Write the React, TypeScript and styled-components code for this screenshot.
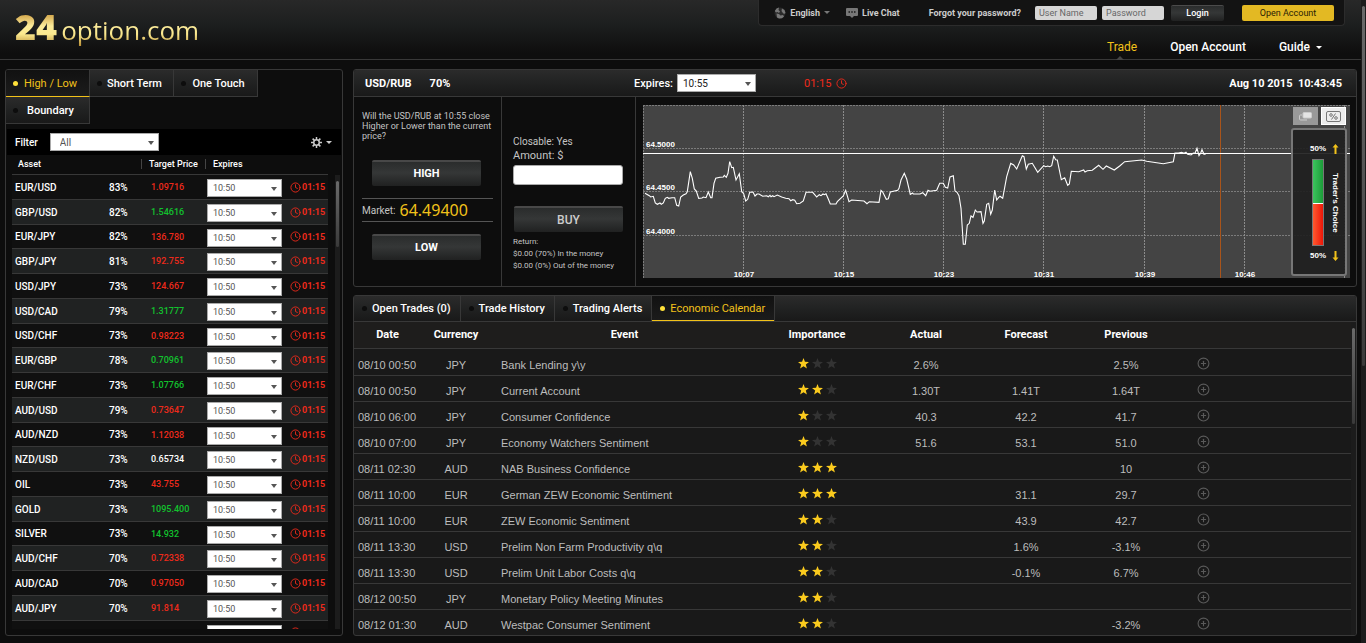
import React from "react";
import styled, { createGlobalStyle, css } from "styled-components";
import { CirclePlus, Clock } from "lucide-react";

const c = {
  gold: "#f2c21a",
  red: "#ee2a1b",
  green: "#12c22e",
  line: "#383838",
  page: "#0d0d0d",
};

const GlobalStyle = createGlobalStyle`
  *, *::before, *::after { box-sizing: border-box; }
  body {
    margin: 0;
    background: ${c.page};
    color: #fff;
    font-family: Roboto, "Liberation Sans", sans-serif;
    font-size: 11px;
  }
  button, input, select { font: inherit; margin: 0; }
  a { color: inherit; text-decoration: none; }
`;

const Page = styled.div`
  display: grid;
  grid-template-columns: minmax(0, 1fr) 5px;
  height: 100vh;
  min-height: 420px;
  overflow: hidden;
`;

const Column = styled.div`
  display: flex;
  flex-direction: column;
  min-height: 0;
  min-width: 0;
`;

/* Slim scroll rail */

const Rail = styled.div<{ $thumb: string }>`
  display: flex;
  flex-direction: column;
  justify-content: space-between;
  align-items: center;
  width: 5px;
  flex: none;
  background: #1c1c1c;
  &::before {
    content: "";
    width: 3px;
    height: ${(p) => p.$thumb};
    margin-top: 6px;
    background: linear-gradient(#6a6a6a, #3a3a3a);
    border-radius: 2px;
  }
`;

const Caret = styled.span<{ $color?: string }>`
  display: inline-block;
  border: 3px solid transparent;
  border-top-color: ${(p) => p.$color ?? "#ccc"};
  border-bottom: 0;
`;

/* Header */

const Header = styled.header`
  display: flex;
  justify-content: space-between;
  height: 60px;
  flex: none;
  border-bottom: 1px solid ${c.line};
  background: linear-gradient(#282828, #1d1f1f 40%, #0e0e0e 90%);
`;

const Logo = styled.a`
  display: flex;
  align-items: baseline;
  padding: 7px 0 0 15px;
  height: 50px;
  font: 400 26px/40px "Open Sans", sans-serif;
  background: linear-gradient(#c9973a 12px, #fbeb9a 26px, #fbe98f 34px, #b98f35 46px);
  background-clip: text;
  -webkit-background-clip: text;
  color: transparent;
`;

const LogoMark = styled.strong`
  font-size: 36px;
  font-weight: 800;
  padding-right: 4px;
`;

const HeaderRight = styled.div`
  display: flex;
  flex-direction: column;
  align-items: flex-end;
`;

const TopBar = styled.div`
  display: flex;
  align-items: center;
  height: 26px;
  margin-right: 16px;
  padding: 0 10px 0 15px;
  background: #131313;
  border: 1px solid #2c2c2c;
  border-top: 0;
  border-radius: 0 0 4px 4px;
  font-size: 9px;
  font-weight: 700;
  color: #ccc;
`;

const TopLink = styled.a<{ $gap: number }>`
  display: flex;
  align-items: center;
  gap: 4px;
  margin-right: ${(p) => p.$gap}px;
  white-space: nowrap;
`;

const LoginForm = styled.form`
  display: flex;
  align-items: center;
  gap: 5px;
`;

const LoginInput = styled.input`
  width: 62px;
  height: 14px;
  padding: 0 4px;
  border: 0;
  border-radius: 2px;
  background: #d6d6d6;
  font-weight: 400;
  &::placeholder { color: #666; opacity: 1; }
`;

const darkButton = css`
  border: 0;
  border-top: 1px solid #4b4b4b;
  border-radius: 2px;
  background: linear-gradient(#2a2c2c, #353737 45%, #202121);
  color: #fff;
  padding: 0;
`;

const LoginButton = styled.button`
  ${darkButton}
  width: 53px;
  height: 16px;
  margin: 0 18px 0 2px;
  font-weight: 500;
`;

const AccountButton = styled.button`
  width: 92px;
  height: 16px;
  padding: 0;
  border: 0;
  border-radius: 2px;
  background: #e3b923;
  color: #2a2205;
  font-weight: 400;
`;

const Nav = styled.nav`
  display: flex;
  gap: 33px;
  padding: 12px 39px 0 0;
  font-size: 12px;
  font-weight: 500;
  line-height: 16px;
`;

const NavLink = styled.a<{ $active?: boolean }>`
  display: flex;
  align-items: center;
  gap: 6px;
  position: relative;
  height: 18px;
  color: ${(p) => (p.$active ? c.gold : "#fff")};
  ${(p) => p.$active && css`
    font-weight: 400;
    &::after {
      content: "";
      position: absolute;
      left: 9px;
      top: 18px;
      border: 4px solid transparent;
      border-bottom-color: #444;
      border-top: 0;
    }
  `}
`;

/* Panels and tabs */

const Main = styled.main`
  display: flex;
  gap: 10px;
  flex: 1;
  min-height: 0;
  padding: 9px 4px 7px 5px;
`;

const Panel = styled.section`
  display: flex;
  flex-direction: column;
  border: 1px solid ${c.line};
  border-radius: 3px;
  min-height: 0;
  overflow: hidden;
`;

const AssetPanel = styled(Panel)`
  width: 338px;
  flex: none;
`;

const Right = styled.div`
  display: flex;
  flex-direction: column;
  gap: 8px;
  flex: 1;
  min-width: 0;
`;

const panelBar = "linear-gradient(#2b2b2b, #212222 50%, #191919)";

const AssetTabs = styled.div`
  display: flex;
  flex-wrap: wrap;
  padding-right: 60px;
`;

const CalendarTabs = styled.div`
  display: flex;
  height: 26px;
  flex: none;
  background: ${panelBar};
  border-bottom: 1px solid ${c.line};
`;

const TabButton = styled.button<{ $active?: boolean }>`
  display: flex;
  align-items: center;
  border: 0;
  border-right: 1px solid ${c.line};
  background: ${(p) => (p.$active ? "linear-gradient(#111, #1c1c1c)" : panelBar)};
  box-shadow: ${(p) => (p.$active ? `inset 0 -1px ${c.gold}` : "none")};
  color: ${(p) => (p.$active ? c.gold : "#fff")};
  font-weight: ${(p) => (p.$active ? 400 : 500)};
  white-space: nowrap;
  &::before {
    content: "";
    width: 5px;
    height: 5px;
    flex: none;
    border-radius: 50%;
    background: ${(p) => (p.$active ? "#ffe13a" : "#0d0d0d")};
  }
`;

const AssetTab = styled(TabButton)`
  width: 84px;
  height: 27px;
  padding: 1px 6px 0 7px;
  border-bottom: 1px solid ${(p) => (p.$active ? c.gold : c.line)};
  box-shadow: none;
  span { flex: 1; text-align: center; }
`;

const CalendarTab = styled(TabButton)`
  gap: 5px;
  height: 25px;
  padding: 0 9px 0 8px;
`;

/* Selects */

const SelectBox = styled.span<{ $w: number }>`
  display: inline-block;
  position: relative;
  width: ${(p) => p.$w}px;
  height: 18px;
  vertical-align: top;
  &::after {
    content: "";
    position: absolute;
    right: 5px;
    top: 8px;
    border: 3px solid transparent;
    border-top: 4px solid #555;
    border-bottom: 0;
    pointer-events: none;
  }
`;

const Select = styled.select<{ $pad?: number; $ink?: string }>`
  appearance: none;
  display: block;
  width: 100%;
  height: 18px;
  padding: 0 10px 0 ${(p) => p.$pad ?? 5}px;
  border: 1px solid #aaa;
  border-radius: 0;
  background: #fff;
  color: ${(p) => p.$ink ?? "#555"};
  font-weight: 400;
`;

function Dropdown({ label, value, width, pad, ink }: { label: string; value: string; width: number; pad?: number; ink?: string }) {
  return (
    <SelectBox $w={width}>
      <Select aria-label={label} defaultValue={value} $pad={pad} $ink={ink}>
        <option>{value}</option>
      </Select>
    </SelectBox>
  );
}

/* Asset list */

const FilterRow = styled.div`
  display: flex;
  align-items: center;
  height: 26px;
  flex: none;
  margin: 5px 1px 0;
  padding: 0 9px 0 8px;
  background: #000;
  font-size: 10px;
`;

const FilterLabel = styled.label`
  display: flex;
  align-items: center;
  gap: 12px;
  font-weight: 500;
  flex: 1;
`;

const IconButton = styled.button`
  display: flex;
  align-items: center;
  gap: 4px;
  padding: 0;
  border: 0;
  background: none;
  color: #ccc;
`;

const ListArea = styled.div`
  display: flex;
  justify-content: space-between;
  flex: 1;
  min-height: 0;
  padding: 0 2px 0 6px;
  margin-bottom: 6px;
  overflow: hidden;
`;

const ListRail = styled(Rail)`
  margin-top: 20px;
`;

const AssetTable = styled.table`
  width: 316px;
  height: max-content;
  border-collapse: separate;
  border-spacing: 0;
  table-layout: fixed;
  font-size: 9px;
  font-weight: 500;
  td, th { padding: 0; text-align: left; white-space: nowrap; }
  th { height: 20px; padding-bottom: 2px; font-weight: 500; border-bottom: 1px solid ${c.line}; }
`;

const HeadLabel = styled.span<{ $rule?: boolean }>`
  display: block;
  line-height: 10px;
  padding-left: ${(p) => (p.$rule ? 7 : 6)}px;
  border-left: ${(p) => (p.$rule ? "1px solid #444" : "0")};
`;

const AssetRow = styled.tr`
  height: 25px;
  background: #101010;
  &:nth-child(even) { background: #202222; }
  &:nth-child(4n + 3) { height: 24px; }
  td { border-bottom: 1px solid ${c.line}; }
`;

const NameCell = styled.td`
  font-size: 10px;
  && { padding-left: 3px; }
`;

const PctCell = styled.td`
  font-size: 10px;
`;

const PriceCell = styled.td<{ $dir: string }>`
  && { padding-left: 10px; }
  color: ${(p) => (p.$dir === "up" ? c.green : p.$dir === "down" ? c.red : "#fff")};
`;

const SelectCell = styled.td`
  && { padding: 2px 0 0 2px; }
`;

const Timer = styled.span`
  display: flex;
  align-items: center;
  gap: 1px;
  color: ${c.red};
  font-weight: 700;
`;

const ASSETS: [string, string, string, string][] = [
  ["EUR/USD", "83%", "1.09716", "down"],
  ["GBP/USD", "82%", "1.54616", "up"],
  ["EUR/JPY", "82%", "136.780", "down"],
  ["GBP/JPY", "81%", "192.755", "down"],
  ["USD/JPY", "73%", "124.667", "down"],
  ["USD/CAD", "79%", "1.31777", "up"],
  ["USD/CHF", "73%", "0.98223", "down"],
  ["EUR/GBP", "78%", "0.70961", "up"],
  ["EUR/CHF", "73%", "1.07766", "up"],
  ["AUD/USD", "79%", "0.73647", "down"],
  ["AUD/NZD", "73%", "1.12038", "down"],
  ["NZD/USD", "73%", "0.65734", "flat"],
  ["OIL", "73%", "43.755", "down"],
  ["GOLD", "73%", "1095.400", "up"],
  ["SILVER", "73%", "14.932", "up"],
  ["AUD/CHF", "70%", "0.72338", "down"],
  ["AUD/CAD", "70%", "0.97050", "down"],
  ["AUD/JPY", "70%", "91.814", "down"],
];

/* Trade ticket */

const TradePanel = styled(Panel)`
  flex: none;
`;

const TradeHead = styled.div`
  display: grid;
  grid-template-columns: 269px auto 1fr;
  align-items: center;
  height: 27px;
  padding: 0 14px 0 11px;
  background: ${panelBar};
  border-bottom: 1px solid ${c.line};
  font-weight: 700;
`;

const HeadGroup = styled.div<{ $gap: number }>`
  display: flex;
  align-items: center;
  gap: ${(p) => p.$gap}px;
`;

const ExpiresLabel = styled.label`
  display: flex;
  align-items: center;
  gap: 4px;
  font-weight: 500;
  select { font-size: 10px; }
`;

const HeadTimer = styled.span`
  display: flex;
  align-items: center;
  gap: 5px;
  color: ${c.red};
  font-weight: 400;
`;

const HeadClock = styled.time`
  justify-self: end;
  white-space: pre;
`;

const TradeBody = styled.div`
  display: flex;
  height: 189px;
`;

const Direction = styled.div`
  width: 148px;
  flex: none;
  padding: 14px 8px 0;
  border-right: 1px solid ${c.line};
  color: #c4c4c4;
`;

const Question = styled.p`
  height: 49px;
  margin: 0;
  font-size: 9px;
  line-height: 10px;
`;

const ActionButton = styled.button`
  ${darkButton}
  display: block;
  width: 109px;
  height: 26px;
  margin: 0 10px;
  padding-bottom: 1px;
  border-top: 2px solid #484848;
  font-weight: 700;
`;

const MarketRow = styled.div`
  display: flex;
  align-items: center;
  gap: 4px;
  height: 24px;
  margin: 12px 0;
  border: 1px solid #555;
  border-width: 1px 0;
  font-size: 10px;
`;

const MarketPrice = styled.span`
  font: 400 16px/22px "Noto Sans", sans-serif;
  color: ${c.gold};
`;

const Order = styled.div`
  width: 134px;
  flex: none;
  padding: 38px 12px 0 11px;
  border-right: 1px solid ${c.line};
  color: #c4c4c4;
  font-size: 10px;
  line-height: 14px;
`;

const AmountLabel = styled.label`
  display: block;
  font-size: 11px;
  line-height: 13px;
`;

const AmountInput = styled.input`
  display: block;
  width: 110px;
  height: 20px;
  margin: 3px 0 21px;
  border: 1px solid #aaa;
  border-radius: 3px;
  background: #fff;
`;

const BuyButton = styled(ActionButton)`
  margin: 0 0 4px 1px;
  font-size: 12px;
  font-weight: 500;
  color: #ccc;
`;

const ReturnText = styled.p`
  margin: 0;
  font-size: 8px;
  line-height: 12px;
  white-space: nowrap;
`;

/* Chart */

const ChartWrap = styled.div`
  position: relative;
  flex: 1;
  min-width: 0;
  height: 173px;
  margin: 8px 6px 0 7px;
  background: #444;
  overflow: hidden;
`;

const ChartSvg = styled.svg`
  display: block;
  width: 100%;
  height: 173px;
  text {
    font: 700 8px "Liberation Sans", sans-serif;
    fill: #fff;
  }
`;

const ChartTools = styled.div`
  position: absolute;
  right: 4px;
  top: 2px;
  display: flex;
  gap: 3px;
`;

const ToolButton = styled.button<{ $on?: boolean }>`
  display: grid;
  place-items: center;
  width: 25px;
  height: 18px;
  padding: 0;
  border: 1px solid ${(p) => (p.$on ? "#fff" : "#999")};
  background: ${(p) => (p.$on ? "#ececec" : "#999")};
`;

const ChoicePanel = styled.div`
  position: absolute;
  right: 3px;
  top: 23px;
  width: 56px;
  height: 148px;
  display: grid;
  grid-template-columns: 16px 10px;
  grid-template-rows: 12px 87px 12px;
  justify-content: end;
  align-content: center;
  justify-items: center;
  align-items: center;
  column-gap: 4px;
  row-gap: 4px;
  padding: 1px 5px 0 0;
  border: 2px solid #777;
  border-radius: 3px;
  background: rgba(32, 32, 32, 0.92);
  font: 700 8px/12px "Liberation Sans", sans-serif;
`;

const ChoiceBar = styled.div`
  width: 12px;
  height: 87px;
  border: 1px solid #777;
  background:
    linear-gradient(#fff, #fff) 0 43px / 100% 1px no-repeat,
    linear-gradient(90deg, #3cc45e, #1c9c38) 0 0 / 100% 43px no-repeat,
    linear-gradient(90deg, #ff5a30, #ee1608);
`;

const ChoiceText = styled.span`
  writing-mode: vertical-rl;
  white-space: nowrap;
`;

// Quote samples as [time, price] in chart units, three to a pixel.
const QUOTES = `6,265 19,272 23,276 31,274 37,294 43,298 51,294 55,298 61,294 67,280 73,277 77,280 87,278 95,278 101,301 107,303 113,276 121,270 129,266 133,260 142,200 148,220 154,252 160,258 167,280 177,279 181,276 189,278 196,261 203,278 207,278 213,235 218,220 231,217 241,216 244,211 250,217 255,205 260,170 266,188 271,187 279,225 289,206 296,260 302,266 308,288 314,283 320,262 330,261 336,273 342,267 348,267 359,274 371,272 376,275 381,271 384,275 389,272 393,275 403,270 416,276 428,280 438,281 443,287 449,284 455,286 461,296 471,295 481,288 489,262 509,262 521,276 529,269 534,272 540,267 544,269 549,266 556,282 562,297 579,297 583,290 601,273 608,256 618,290 626,285 663,288 672,296 679,290 708,292 714,256 719,261 730,283 736,281 742,261 764,256 768,250 774,225 784,205 791,222 802,268 809,264 811,267 831,267 839,263 848,272 855,256 861,259 881,256 890,235 901,235 907,247 914,249 921,216 931,212 936,258 942,262 948,272 954,310 961,418 967,418 973,360 979,355 984,333 990,337 997,315 1002,321 1014,320 1020,355 1024,348 1031,298 1037,295 1043,328 1048,315 1055,255 1061,285 1067,277 1071,274 1079,280 1091,215 1103,175 1112,180 1121,192 1138,152 1143,155 1150,192 1156,178 1168,175 1184,202 1202,182 1208,185 1214,183 1220,185 1226,182 1232,154 1238,164 1243,165 1255,224 1265,218 1274,241 1279,237 1285,199 1307,200 1322,195 1326,201 1333,197 1348,196 1367,181 1380,193 1390,183 1414,195 1431,182 1445,170 1467,168 1496,165 1511,169 1561,176 1591,170 1596,144 1606,144 1616,142 1623,145 1629,142 1634,148 1644,150 1651,144 1656,145 1662,130 1668,152 1673,144 1677,134 1683,148 1689,146`;

const LINE = QUOTES.split(" ")
  .map((p) => p.split(",").map((n) => (Number(n) / 3).toFixed(1)).join(","))
  .join(" ");

const PRICES: [number, string][] = [[43, "64.5000"], [86, "64.4500"], [130, "64.4000"]];
const TIMES: [number, string][] = [[100, "10:07"], [200, "10:15"], [300, "10:23"], [400, "10:31"], [501, "10:39"], [601, "10:46"], [701, ""]];

function Chart() {
  return (
    <ChartWrap>
      <ChartSvg viewBox="0 0 707 173" preserveAspectRatio="xMaxYMid slice" role="img" aria-label="USD/RUB price">
        <g stroke="#7c7c7c" strokeDasharray="2 1" fill="none">
          <path d="M0 .5H707M.5 0V173" />
          {PRICES.map(([y]) => <path key={y} d={`M0 ${y}.5H707`} />)}
          {TIMES.map(([x]) => <path key={x} d={`M${x}.5 0V173`} stroke="#8c8c8c" />)}
        </g>
        <path d="M577.5 0V173" stroke="#a9541a" />
        <path d="M0 48.5H707" stroke="#fff" />
        <polyline points={LINE} fill="none" stroke="#fff" strokeWidth="1.1" />
        {PRICES.map(([y, t]) => <text key={t} x="3" y={y - 1}>{t}</text>)}
        {TIMES.map(([x, t]) => t && <text key={x} x={x + 1} y="172" textAnchor="middle">{t}</text>)}
      </ChartSvg>
      <ChartTools>
        <ToolButton aria-label="Detach chart">
          <svg width="13" height="9" viewBox="0 0 13 9" fill="none">
            <rect x="4" y=".5" width="8.5" height="5.5" rx="1" fill="#e4e4e4" stroke="#ccc" />
            <path d="M3 3H1.5Q.5 3 .5 4v3q0 1 1 1H8" stroke="#ccc" />
          </svg>
        </ToolButton>
        <ToolButton $on aria-label="Trader's choice">
          <svg width="15" height="11" viewBox="0 0 15 11" fill="none" stroke="#777">
            <rect x=".5" y=".5" width="14" height="10" rx="1.5" />
            <circle cx="5" cy="4" r="1.3" />
            <circle cx="10" cy="7" r="1.3" />
            <path d="M9.5 2.5l-4 6" />
          </svg>
        </ToolButton>
      </ChartTools>
      <ChoicePanel>
        <span>50%</span>
        <Arrow />
        <ChoiceBar />
        <ChoiceText>Trader's Choice</ChoiceText>
        <span>50%</span>
        <Arrow down />
      </ChoicePanel>
    </ChartWrap>
  );
}

function Arrow({ down }: { down?: boolean }) {
  return (
    <svg width="7" height="10" viewBox="0 0 7 10" fill={c.gold}>
      <path d={down ? "M2.5 0h2v6.500H6.5L3.5 10 .5 6.500h2z" : "M2.5 10h2V3.500H6.5L3.5 0 .5 3.500h2z"} />
    </svg>
  );
}

/* Economic calendar */

const CalendarPanel = styled(Panel)`
  flex: 1;
  background: #191919;
`;

const CalendarArea = styled.div`
  display: flex;
  flex: 1;
  min-height: 0;
  overflow: hidden;
`;

const CalendarTable = styled.table`
  flex: 1;
  width: 100%;
  height: max-content;
  border-collapse: separate;
  border-spacing: 0;
  table-layout: fixed;
  th, td {
    padding: 0;
    border-bottom: 1px solid ${c.line};
    white-space: nowrap;
  }
  th {
    height: 27px;
    padding-bottom: 2px;
    background: #1e1d1c;
    font-weight: 700;
  }
  td {
    height: 26px;
    padding-top: 5px;
    text-align: center;
    font-family: "Liberation Sans", sans-serif;
    color: #bdbdbd;
  }
  tbody tr:first-child td { height: 27px; }
`;

const LeftCell = styled.td<{ $pad: number }>`
  && { text-align: left; padding-left: ${(p) => p.$pad}px; }
`;

const IconCell = styled.td`
  && { padding-top: 2px; line-height: 0; }
`;

const Stars = styled.span`
  display: inline-flex;
  gap: 3px;
`;

const MoreButton = styled.button`
  padding: 0;
  border: 0;
  background: none;
  color: #5a5a5a;
  line-height: 0;
`;

const EVENTS: [string, string, string, number, string, string, string][] = [
  ["08/10 00:50", "JPY", "Bank Lending y\\y", 1, "2.6%", "", "2.5%"],
  ["08/10 00:50", "JPY", "Current Account", 2, "1.30T", "1.41T", "1.64T"],
  ["08/10 06:00", "JPY", "Consumer Confidence", 1, "40.3", "42.2", "41.7"],
  ["08/10 07:00", "JPY", "Economy Watchers Sentiment", 1, "51.6", "53.1", "51.0"],
  ["08/11 02:30", "AUD", "NAB Business Confidence", 3, "", "", "10"],
  ["08/11 10:00", "EUR", "German ZEW Economic Sentiment", 3, "", "31.1", "29.7"],
  ["08/11 10:00", "EUR", "ZEW Economic Sentiment", 2, "", "43.9", "42.7"],
  ["08/11 13:30", "USD", "Prelim Non Farm Productivity q\\q", 2, "", "1.6%", "-3.1%"],
  ["08/11 13:30", "USD", "Prelim Unit Labor Costs q\\q", 2, "", "-0.1%", "6.7%"],
  ["08/12 00:50", "JPY", "Monetary Policy Meeting Minutes", 2, "", "", ""],
  ["08/12 01:30", "AUD", "Westpac Consumer Sentiment", 2, "", "", "-3.2%"],
];

function Star({ on }: { on: boolean }) {
  return (
    <svg width="11" height="11" viewBox="0 0 10 10" fill={on ? "#fbcb1e" : "#333"}>
      <path d="M5 0l1.300 3.500 3.700.15-2.900 2.300 1 3.600L5 7.500 1.900 9.550l1-3.600L0 3.650l3.700-.15z" />
    </svg>
  );
}

function Gear() {
  return (
    <svg width="11" height="11" viewBox="0 0 22 22" fill="none" stroke="#ccc">
      <circle cx="11" cy="11" r="5.500" strokeWidth="3" />
      {[0, 45, 90, 135].map((a) => (
        <path key={a} d="M11 0v5M11 17v5" strokeWidth="3" transform={`rotate(${a} 11 11)`} />
      ))}
    </svg>
  );
}

function Globe() {
  return (
    <svg width="12" height="12" viewBox="0 0 12 12" fill="#777">
      <circle cx="6" cy="6" r="5.500" fill="#2a2a2a" />
      <path d="M5 .5L2.500 1.500.8 4 2 5.500l1.500-.5L5 6l1-1.500L4.500 3z" />
      <path d="M8 1.500l2.500 1.500 1 3-1.500 1-1.500-1.500L7.500 4z" />
      <path d="M2.500 6.500L5 7l1.500 1.500 2.500-.5 1 1.500-2 1.800-3 .3L3 10.500z" />
    </svg>
  );
}

export default function App() {
  return (
    <>
      <GlobalStyle />
      <Page>
        <Column>
          <Header>
            <Logo href="#"><LogoMark>24</LogoMark>option.com</Logo>
            <HeaderRight>
              <TopBar>
                <TopLink href="#" $gap={16}>
                  <Globe />English <Caret $color="#777" />
                </TopLink>
                <TopLink href="#" $gap={29}>
                  <svg width="12" height="10" viewBox="0 0 12 10">
                    <path d="M1 0h10q1 0 1 1v6q0 1-1 1H8L6 10 4 8H1Q0 8 0 7V1q0-1 1-1z" fill="#777" />
                    <path d="M2.500 4h1.500M5.250 4h1.500M8 4h1.500" stroke="#1a1a1a" strokeWidth="1.500" />
                  </svg>
                  Live Chat
                </TopLink>
                <TopLink href="#" $gap={14}>Forgot your password?</TopLink>
                <LoginForm>
                  <LoginInput aria-label="User Name" placeholder="User Name" />
                  <LoginInput aria-label="Password" placeholder="Password" type="password" />
                  <LoginButton type="button">Login</LoginButton>
                </LoginForm>
                <AccountButton>Open Account</AccountButton>
              </TopBar>
              <Nav>
                <NavLink href="#" $active>Trade</NavLink>
                <NavLink href="#">Open Account</NavLink>
                <NavLink href="#">Guide <Caret $color="#fff" /></NavLink>
              </Nav>
            </HeaderRight>
          </Header>

          <Main>
            <AssetPanel>
              <AssetTabs>
                <AssetTab $active><span>High / Low</span></AssetTab>
                <AssetTab><span>Short Term</span></AssetTab>
                <AssetTab><span>One Touch</span></AssetTab>
                <AssetTab><span>Boundary</span></AssetTab>
              </AssetTabs>
              <FilterRow>
                <FilterLabel>
                  Filter
                  <Dropdown label="Filter" value="All" width={109} pad={9} />
                </FilterLabel>
                <IconButton aria-label="Settings"><Gear /><Caret /></IconButton>
              </FilterRow>
              <ListArea>
                <AssetTable>
                  <colgroup>
                    <col width="97" /><col width="32" /><col width="64" /><col width="85" /><col />
                  </colgroup>
                  <thead>
                    <tr>
                      <th colSpan={2}><HeadLabel>Asset</HeadLabel></th>
                      <th><HeadLabel $rule>Target Price</HeadLabel></th>
                      <th colSpan={2}><HeadLabel $rule>Expires</HeadLabel></th>
                    </tr>
                  </thead>
                  <tbody>
                    {ASSETS.map(([name, pct, price, dir]) => (
                      <AssetRow key={name}>
                        <NameCell>{name}</NameCell>
                        <PctCell>{pct}</PctCell>
                        <PriceCell $dir={dir}>{price}</PriceCell>
                        <SelectCell><Dropdown label={`${name} expiry`} value="10:50" width={75} /></SelectCell>
                        <td><Timer><Clock size={11} strokeWidth={2} />01:15</Timer></td>
                      </AssetRow>
                    ))}
                    <AssetRow>
                      <td colSpan={3} />
                      <SelectCell><Dropdown label="Expiry" value="" width={75} /></SelectCell>
                      <td><Timer><Clock size={11} strokeWidth={2} /></Timer></td>
                    </AssetRow>
                  </tbody>
                </AssetTable>
                <ListRail $thumb="66px" />
              </ListArea>
            </AssetPanel>

            <Right>
              <TradePanel>
                <TradeHead>
                  <HeadGroup $gap={18}><span>USD/RUB</span><span>70%</span></HeadGroup>
                  <HeadGroup $gap={48}>
                    <ExpiresLabel>
                      Expires:
                      <Dropdown label="Expires" value="10:55" width={79} ink="#222" />
                    </ExpiresLabel>
                    <HeadTimer>01:15 <Clock size={11} /></HeadTimer>
                  </HeadGroup>
                  <HeadClock>Aug 10 2015  10:43:45</HeadClock>
                </TradeHead>
                <TradeBody>
                  <Direction>
                    <Question>Will the USD/RUB at 10:55 close Higher or Lower than the current price?</Question>
                    <ActionButton>HIGH</ActionButton>
                    <MarketRow>Market: <MarketPrice>64.49400</MarketPrice></MarketRow>
                    <ActionButton>LOW</ActionButton>
                  </Direction>
                  <Order>
                    Closable: Yes
                    <AmountLabel htmlFor="amount">Amount: $</AmountLabel>
                    <AmountInput id="amount" />
                    <BuyButton>BUY</BuyButton>
                    <ReturnText>Return:</ReturnText>
                    <ReturnText>$0.00 (70%) In the money</ReturnText>
                    <ReturnText>$0.00 (0%) Out of the money</ReturnText>
                  </Order>
                  <Chart />
                </TradeBody>
              </TradePanel>

              <CalendarPanel>
                <CalendarTabs>
                  <CalendarTab>Open Trades (0)</CalendarTab>
                  <CalendarTab>Trade History</CalendarTab>
                  <CalendarTab>Trading Alerts</CalendarTab>
                  <CalendarTab $active>Economic Calendar</CalendarTab>
                </CalendarTabs>
                <CalendarArea>
                  <CalendarTable>
                    <colgroup>
                      <col width="67" /><col width="70" /><col /><col width="118" />
                      <col width="100" /><col width="100" /><col width="100" /><col width="54" /><col width="121" />
                    </colgroup>
                    <thead>
                      <tr>
                        <th>Date</th><th>Currency</th><th>Event</th><th>Importance</th>
                        <th>Actual</th><th>Forecast</th><th>Previous</th><th /><th />
                      </tr>
                    </thead>
                    <tbody>
                      {EVENTS.map(([date, cur, name, stars, actual, forecast, previous]) => (
                        <tr key={name}>
                          <LeftCell $pad={4}>{date}</LeftCell>
                          <td>{cur}</td>
                          <LeftCell $pad={10}>{name}</LeftCell>
                          <IconCell>
                            <Stars role="img" aria-label={`${stars} of 3`}>
                              {[1, 2, 3].map((n) => <Star key={n} on={n <= stars} />)}
                            </Stars>
                          </IconCell>
                          <td>{actual}</td>
                          <td>{forecast}</td>
                          <td>{previous}</td>
                          <IconCell>
                            <MoreButton aria-label={`More on ${name}`}><CirclePlus size={13} /></MoreButton>
                          </IconCell>
                          <td />
                        </tr>
                      ))}
                    </tbody>
                  </CalendarTable>
                  <Rail $thumb="96px" />
                </CalendarArea>
              </CalendarPanel>
            </Right>
          </Main>
        </Column>
        <Rail $thumb="360px" />
      </Page>
    </>
  );
}
